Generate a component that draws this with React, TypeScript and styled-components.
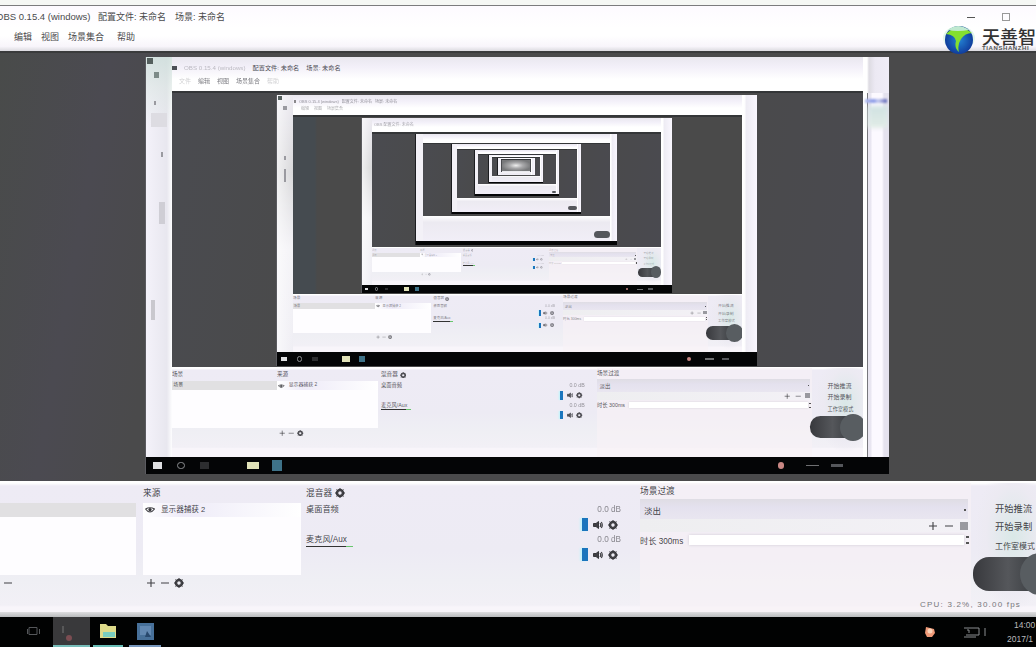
import React from 'react';
import styled, { createGlobalStyle } from 'styled-components';

const Global = createGlobalStyle`
  * { box-sizing: border-box; }
  body { margin: 0; background: #000; overflow: hidden; }
  #root { font-family: "Liberation Sans", "Noto Sans CJK SC", sans-serif; }
`;

const Screen = styled.div`
  position: relative;
  display: flex;
  flex-direction: column;
  width: 1036px;
  height: 647px;
  overflow: hidden;
  color: #333;
`;
const Desktop = styled.div`
  height: 6px;
  background: #f5f7f4;
  border-bottom: 1px solid #7b7b7d;
`;
const Bar = styled.div<{ $h: number; $bg?: string; $pb?: number }>`
  display: flex;
  align-items: center;
  height: ${p => p.$h}px;
  padding-bottom: ${p => p.$pb || 0}px;
  background: ${p => p.$bg || 'linear-gradient(#fdfaff, #fff)'};
`;
const Label = styled.span<{ $w: number; $ml?: number; $size?: number }>`
  flex: none;
  width: ${p => p.$w}px;
  margin-left: ${p => p.$ml || 0}px;
  font-size: ${p => p.$size || 9.5}px;
  line-height: 1.2;
  color: #4a4a4c;
  white-space: nowrap;
`;
const Controls = styled.div`
  display: flex;
  align-items: center;
  gap: 27px;
  margin-left: auto;
  padding-right: 26px;
`;
const MinLine = styled.i`width: 8px; height: 1px; background: #555;`;
const MaxBox = styled.i`width: 8px; height: 8px; border: 1px solid #999;`;
const Logo = styled.div`
  position: absolute;
  left: 941px;
  top: 25px;
  display: flex;
  gap: 7px;
  svg { flex: none; }
`;
const LogoText = styled.div`
  padding-top: 2px;
  font: 500 18px/18px "Noto Sans CJK SC", sans-serif;
  color: #333;
  white-space: nowrap;
  small { display: block; font: 700 6px/6px "Liberation Sans", sans-serif; letter-spacing: .6px; color: #555; }
`;

/* preview canvas and mirrored windows */
const Stage = styled.div<{ $h: number }>`
  flex: none;
  height: ${p => p.$h}px;
  overflow: hidden;
  border-top: 2px solid #3a3b3c;
  background: linear-gradient(100deg, #494b4a 0, #4b4a51 10%, #4a4a4b 18%, #4a4a4b 85%, #4a4a4a);
`;
const Frame = styled.div<{ $x: number; $y: number; $cols: string; $rows: string; $line: string }>`
  display: grid;
  width: max-content;
  margin-left: ${p => p.$x}px;
  margin-top: ${p => p.$y}px;
  grid-template-columns: ${p => p.$cols};
  grid-template-rows: ${p => p.$rows};
  background: #f1eff6;
  box-shadow: -1px 0 0 ${p => p.$line};
`;
const LeftStrip = styled.div<{ $i: number }>`
  grid-area: 1 / 1 / 4 / 2;
  display: flex;
  flex-direction: column;
  align-items: center;
  overflow: hidden;
  background: ${p => p.$i > 2 ? '#f3f1f7' : p.$i > 0
    ? 'linear-gradient(90deg, rgba(255,255,255,.6), rgba(255,255,255,0)), linear-gradient(#eceaf1, #d8d8da 30%, #f4f3f7 60%, #efeef4)'
    : 'linear-gradient(rgba(205,222,218,.8), rgba(215,228,222,.5) 30px, rgba(240,240,245,0) 70px), linear-gradient(90deg, #f4f2fa, #e8e7ef 80%, #fdfdfe)'};
`;
const Corner = styled.i<{ $s: number }>`
  flex: none;
  align-self: flex-start;
  width: ${p => p.$s}px;
  height: ${p => p.$s}px;
  margin: 1px;
  background: #55605e;
`;
const Mark = styled.i<{ $t: number; $h: number; $w?: number; $c?: string; $ml?: number }>`
  flex: none;
  width: ${p => p.$w || 2}px;
  height: ${p => p.$h}px;
  margin-top: ${p => p.$t}px;
  margin-left: ${p => p.$ml || 0}px;
  background: ${p => p.$c || '#9a9aa0'};
`;
const RightStrip = styled.div<{ $big: boolean }>`
  grid-area: 1 / 3 / 4 / 4;
  overflow: hidden;
  background: linear-gradient(90deg, #fff 0 15%, #eeecf4 30%, #faf7ff);
  ${p => p.$big && 'background: linear-gradient(90deg, #fff 0 4px, #77777c 4px 5px, #e9e6f1 5px 8px, #fcf9ff 9px 19px, #e5e2ee 21px);'}
`;
const TopCap = styled.div`height: 36px; background: linear-gradient(90deg, #fff 0 4px, #dddbe2 6px, #ece9f3 12px, #f0edf7);`;
const BlueMark = styled.div`
  width: 22px;
  height: 4px;
  margin: 6px 0 0 2px;
  background: linear-gradient(90deg, #b7c0ef, #8b9ae7 40%, #c8cdf0 60%, #5e65b6);
  filter: blur(1px);
`;
const GreenPatch = styled.div`
  width: 20px;
  height: 22px;
  margin: 3px 0 0 5px;
  background: linear-gradient(#d0e2e2, #e2ede7);
  filter: blur(2px);
`;
const Head = styled.div`
  grid-area: 1 / 2 / 2 / 3;
  display: flex;
  flex-direction: column;
  overflow: hidden;
  background: linear-gradient(#e9e7ef 0, #f3f0f9 30%, #fff 65%);
`;
const HeadRow = styled.div<{ $fs: number; $h: number; $pl: number; $o?: number; $gap?: number }>`
  display: flex;
  align-items: center;
  flex: none;
  gap: ${p => p.$gap ?? 7}px;
  height: ${p => p.$h}px;
  padding-left: ${p => p.$pl}px;
  font-size: ${p => p.$fs}px;
  line-height: 1;
  color: #4d4d55;
  opacity: ${p => p.$o || 1};
  white-space: nowrap;
`;
const Faint = styled.span`opacity: .35;`;
const Canvas = styled.div<{ $i: number }>`
  grid-area: 2 / 2 / 3 / 3;
  overflow: hidden;
  border-top: ${p => (p.$i < 3 ? 2 : 1)}px solid #343638;
  background: ${p => p.$i === 1 ? 'linear-gradient(90deg, #454b50 0 22px, #4a4a4a 24px)' : 'linear-gradient(100deg, #4a4b50, #4a4a4a 25%, #4a4a4b 75%, #4a4a50)'};
`;
const DockCell = styled.div`grid-area: 3 / 2 / 4 / 3; min-width: 0;`;
const Tasks = styled.div<{ $fs: number }>`
  grid-area: 4 / 1 / 5 / 4;
  display: flex;
  align-items: center;
  overflow: hidden;
  font-size: ${p => p.$fs}px;
  padding: 0 .7em;
  gap: 1.6em;
  background: #040506;
`;
const Glyph = styled.i<{ $c: string; $w?: number; $h?: number; $ml?: number; $round?: boolean }>`
  flex: none;
  width: ${p => p.$w || .9}em;
  height: ${p => p.$h || .7}em;
  margin-left: ${p => p.$ml || 0}em;
  border-radius: ${p => p.$round ? '50%' : 0};
  background: ${p => p.$c};
`;
const Ring = styled.i`
  flex: none;
  width: .8em;
  height: .8em;
  border: .12em solid #8b8d90;
  border-radius: 50%;
`;
const Vanish = styled.div`
  width: 28px;
  height: 13px;
  margin: 0 1px;
  background: radial-gradient(ellipse, #eee 0, #a9a9ab 35%, #77787a 75%);
  border-bottom: 2px solid #e9e9ed;
`;

/* docks: every length is in em so that it scales with the window */
const DockBox = styled.div<{ $s: number; $cols: string; $h: string; $o: number }>`
  position: relative;
  display: grid;
  grid-template-columns: ${p => p.$cols};
  height: ${p => p.$h};
  padding-top: .2em;
  font-size: ${p => p.$s * 10}px;
  overflow: hidden;
  white-space: nowrap;
  background: linear-gradient(#fff 0 .2em, #eeebf5 .5em, #edebf4 7em, #efeff4 10em, #f2f0f6 12.4em, #f8f5fa 12.6em);
  --ink: rgba(45, 45, 50, ${p => p.$o});
  color: var(--ink);
`;
const Panel = styled.div<{ $bg?: string }>`min-width: 0; background: ${p => p.$bg || 'transparent'};`;
const Title = styled.div<{ $pl?: number; $h?: number }>`
  display: flex;
  align-items: center;
  gap: .3em;
  height: ${p => p.$h || 2}em;
  padding-left: ${p => p.$pl || 0}em;
  line-height: 1;
  & > span { font-size: .87em; }
`;
const List = styled.div<{ $mr: number }>`height: 7.2em; margin-right: ${p => p.$mr}em; background: #fefdff;`;
const Item = styled.div<{ $on?: boolean }>`
  display: flex;
  align-items: center;
  gap: .6em;
  height: 1.4em;
  padding-left: .2em;
  line-height: 1;
  background: ${p => p.$on ? '#e1e0e2' : 'linear-gradient(90deg, #fff, #eeebf8 4em, #fff)'};
  & > span { font-size: .76em; }
`;
const Tools = styled.div`
  display: flex;
  align-items: center;
  gap: .4em;
  height: 1.6em;
  padding-left: .3em;
`;
const Icon = styled.svg`width: 1em; height: 1em; flex: none; fill: none; stroke: var(--ink);`;
const Track = styled.div`height: 3em; padding: .2em 1.9em 0 .3em;`;
const Line = styled.div`
  display: flex;
  justify-content: space-between;
  align-items: center;
  height: 1.1em;
  line-height: 1;
  span { font-size: .82em; }
  span:last-child { opacity: .6; }
`;
const Level = styled.div<{ $on?: boolean }>`
  width: 4.7em;
  height: max(.1em, 1px);
  background: ${p => p.$on ? 'linear-gradient(90deg, #333 85%, #68c66e 85%)' : 'transparent'};
`;
const Knobs = styled.div`
  display: flex;
  justify-content: flex-end;
  align-items: center;
  gap: .5em;
  height: 1.5em;
  padding-right: .3em;
`;
const Slider = styled.i`width: .6em; height: 1.3em; background: #1a75bd; box-shadow: -.2em 0 .2em #c5f3fb;`;
const Combo = styled.div`
  display: flex;
  align-items: center;
  justify-content: space-between;
  height: 2em;
  margin-right: .3em;
  padding: .2em .2em 0 .4em;
  background: linear-gradient(#dfdde4, #e4e1ee 40%, #e9e6f0);
  & > span { font-size: .85em; }
  & > i { width: .2em; height: .2em; background: #555; }
`;
const Right = styled.div`
  display: flex;
  align-items: center;
  justify-content: flex-end;
  gap: .6em;
  height: 1.3em;
  padding-right: .3em;
  background: linear-gradient(90deg, #eeeef0, #f3f1f6);
`;
const Duration = styled.div`
  display: flex;
  align-items: center;
  height: 1.6em;
  & > span { width: 6em; font-size: .82em; }
  & > i { flex: 1; height: 1em; background: #fff; box-shadow: 0 0 .3em #ccc9d3; }
  & > b { width: .3em; height: .8em; margin: 0 .2em; border: solid #555; border-width: .2em 0; }
`;
const Buttons = styled.div`
  display: flex;
  flex-direction: column;
  gap: .85em;
  padding: 2.2em 0 0 2.4em;
  line-height: 1.05;
  background: radial-gradient(ellipse at 65% 40%, #d9e8e7 0, #eceaf2 45%, transparent 65%);
  span { display: block; font-size: .93em; }
  span:last-child { font-size: .8em; line-height: 1.2; }
`;
const Pill = styled.div<{ $x: number }>`
  position: absolute;
  left: ${p => p.$x}px;
  top: 7.6em;
  width: 7em;
  height: 3.4em;
  border-radius: 1.6em 0 0 1.6em;
  background: linear-gradient(90deg, #38393d, #55575b 50%, #44474b 75%);
  &::after {
    content: "";
    position: absolute;
    left: 4.7em;
    top: -.4em;
    width: 4em;
    height: 4.2em;
    border-radius: 50%;
    background: #585d61;
  }
`;
const Status = styled.div`
  position: absolute;
  right: 15px;
  bottom: 7px;
  font-size: 8px;
  line-height: 10px;
  color: #77777b;
  letter-spacing: 1.2px;
`;
const BottomEdge = styled.div`
  position: absolute;
  left: 0; right: 0; bottom: 0;
  height: 5px;
  background: linear-gradient(#dedee0, #b9bbbd);
`;

const Gear = () => (
  <Icon viewBox="0 0 10 10" strokeWidth="2.6"><circle cx="5" cy="5" r="3" /><path strokeWidth="1" d="M5 0v2M5 8v2M0 5h2M8 5h2M1.5 1.5l1 1M7.5 7.5l1 1M8.5 1.5l-1 1M1.5 8.5l1-1" /></Icon>
);
const Speaker = () => (
  <Icon viewBox="0 0 10 10"><path fill="var(--ink)" d="M.5 3.5H3L5.5 1.5v7L3 6.5H.5z" /><path strokeWidth="1.2" d="M7 3q1.5 2 0 4M8.3 2q2 3 0 6" /></Icon>
);
const Plus = () => <Icon viewBox="0 0 10 10"><path strokeWidth="1.1" d="M1 5h8M5 1v8" /></Icon>;
const Minus = () => <Icon viewBox="0 0 10 10"><path d="M1 5h8" /></Icon>;
const Eye = () => <Icon viewBox="0 0 10 10"><path strokeWidth="1.2" d="M.5 4Q5 10 9.5 4Q5 1.5 .5 4" /><circle cx="5" cy="4.8" r="1.2" fill="var(--ink)" /></Icon>;

type DockProps = { s: number; cols: string; h: string; ink: number; pill: number; outer?: boolean };
const Dock = ({ s, cols, h, ink, pill, outer }: DockProps) => (
  <DockBox $s={s} $cols={cols} $h={h} $o={ink}>
    <Panel>
      <Title>{!outer && <span>场景</span>}</Title>
      <List $mr={outer ? .7 : 0}><Item $on>{!outer && <span>场景</span>}</Item></List>
      {outer && <Tools><Minus /></Tools>}
    </Panel>
    <Panel>
      <Title><span>来源</span></Title>
      <List $mr={.2}><Item><Eye /><span>显示器捕获 2</span></Item></List>
      <Tools><Plus /><Minus /><Gear /></Tools>
    </Panel>
    <Panel>
      <Title $pl={.3}><span>混音器</span><Gear /></Title>
      <Track>
        <Line><span>桌面音频</span><span>0.0 dB</span></Line>
        <Level />
        <Knobs><Slider /><Speaker /><Gear /></Knobs>
      </Track>
      <Track>
        <Line><span>麦克风/Aux</span><span>0.0 dB</span></Line>
        <Level $on />
        <Knobs><Slider /><Speaker /><Gear /></Knobs>
      </Track>
    </Panel>
    <Panel $bg="rgba(248, 241, 246, .65)">
      <Title $h={1.6}><span>场景过渡</span></Title>
      <Combo><span>淡出</span><i /></Combo>
      <Right><Plus /><Minus /><Glyph $c="#99999f" $w={.8} $h={.8} /></Right>
      <Duration><span>时长 300ms</span><i /><b /></Duration>
    </Panel>
    <Buttons><span>开始推流</span><span>开始录制</span><span>工作室模式</span></Buttons>
    <Pill $x={pill} />
    {outer && <><Status>CPU: 3.2%, 30.00 fps</Status><BottomEdge /></>}
  </DockBox>
);

/* each entry: window box, then its canvas box, then where the taskbar starts */
type Win = { x: number; y: number; r: number; b: number; cx: number; cy: number; cr: number; cb: number; t: number };
const windows: Win[] = [
  { x: 146, y: 57, r: 889, b: 474, cx: 172, cy: 91, cr: 863, cb: 367, t: 457 },
  { x: 277, y: 95, r: 757, b: 366, cx: 293, cy: 115, cr: 742, cb: 294, t: 352 },
  { x: 362, y: 118, r: 672, b: 293, cx: 372, cy: 132, cr: 661, cb: 247, t: 285 },
  { x: 416, y: 134, r: 617, b: 245, cx: 423, cy: 143, cr: 610, cb: 216, t: 241 },
  { x: 452, y: 144, r: 581, b: 214, cx: 457, cy: 149, cr: 577, cb: 198, t: 212 },
  { x: 475, y: 150, r: 559, b: 196, cx: 478, cy: 154, cr: 556, cb: 184, t: 194 },
  { x: 489, y: 155, r: 543, b: 183, cx: 492, cy: 157, cr: 540, cb: 176, t: 182 },
  { x: 498, y: 158, r: 535, b: 175, cx: 501, cy: 159, cr: 531, cb: 172, t: 175 },
];
const docks = [
  { s: .647, cols: '105px 102px 218px 215px 51px', ink: .8, pill: 638 },
  { s: .42, cols: '82px 57px 131px 145px 34px', ink: .6, pill: 413 },
  { s: .27, cols: '48px 42px 87px 88px 24px', ink: .35, pill: 266 },
];

const SmallDock = styled.div<{ $fs: number }>`
  display: flex;
  justify-content: flex-end;
  align-items: flex-end;
  height: 100%;
  padding: 0 0 ${p => p.$fs * .3}px 0;
  background: linear-gradient(#fff, #eceaf1 25%, #f1eef7);
`;
const SmallPill = styled.i<{ $w: number }>`
  width: ${p => p.$w}px;
  height: ${p => p.$w * .42}px;
  border-radius: ${p => p.$w * .25}px;
  background: #55575c;
`;

const Mirror = ({ i, px, py }: { i: number; px: number; py: number }) => {
  const w = windows[i];
  const s = [.647, .42, .27][i] || .17;
  const border = i < 3 ? 2 : 1;
  return (
    <Frame $x={w.x - px} $y={w.y - py}
      $cols={`${w.cx - w.x}px ${w.cr - w.cx}px ${w.r - w.cr}px`}
      $rows={`${w.cy - w.y}px ${w.cb - w.cy}px ${w.t - w.cb}px ${w.b - w.t}px`}
      $line={i > 2 ? '#1c1d20' : '#5b5b60'}>
      <LeftStrip $i={i}>
        {i < 2 && <Corner $s={6 - i * 2} />}
        {i === 0 && <><Mark $t={7} $h={6} $w={5} $ml={-6} $c="#7d8b88" /><Mark $t={23} $h={4} $ml={-8} /><Mark $t={8} $h={14} $w={16} $c="#dddce2" /><Mark $t={25} $h={5} $ml={5} /><Mark $t={45} $h={22} $w={6} $ml={6} $c="#cfced5" /><Mark $t={76} $h={20} $w={4} $ml={-12} $c="#c9c8ce" /></>}
        {i === 1 && <><Mark $t={5} $h={4} $w={4} /><Mark $t={46} $h={4} /><Mark $t={9} $h={13} /></>}
      </LeftStrip>
      <Head>
        {i === 0 && <>
          <HeadRow $fs={6.2} $h={22} $pl={0}><Glyph $c="#4c4f56" $w={.8} $h={.8} /><Faint>OBS 0.15.4 (windows)</Faint><span>配置文件: 未命名</span><span>场景: 未命名</span></HeadRow>
          <HeadRow $fs={6} $h={4} $pl={7} $o={.75}><Faint>文件</Faint><span>编辑</span><span>视图</span><span>场景集合</span><Faint>帮助</Faint></HeadRow>
        </>}
        {i === 1 && <>
          <HeadRow $fs={4} $h={13} $pl={1} $o={.6} $gap={3}><Glyph $c="#444" $w={.5} /><span>OBS 0.15.4 (windows)</span><span>配置文件: 未命名</span><span>场景: 未命名</span></HeadRow>
          <HeadRow $fs={4} $h={2} $pl={8} $o={.45} $gap={5}><span>编辑</span><span>视图</span><span>场景集合</span></HeadRow>
        </>}
        {i === 2 && <HeadRow $fs={4} $h={14} $pl={2} $o={.5} $gap={2}><span>OBS 配置文件: 未命名</span></HeadRow>}
      </Head>
      <Canvas $i={i}>
        {i < windows.length - 1 ? <Mirror i={i + 1} px={w.cx} py={w.cy + border} /> : <Vanish />}
      </Canvas>
      <RightStrip $big={i === 0}>{i === 0 && <><TopCap /><BlueMark /><GreenPatch /></>}</RightStrip>
      <DockCell>
        {i < 3
          ? <Dock s={s} cols={docks[i].cols} h={`${w.t - w.cb}px`} ink={docks[i].ink} pill={docks[i].pill} />
          : <SmallDock $fs={(w.t - w.cb) / 2.2}>{i < 6 && <SmallPill $w={[16, 9, 4][i - 3]} />}</SmallDock>}
      </DockCell>
      <Tasks $fs={s * 15}>
        {i < 3 && <>
          <Glyph $c="#dfe0e2" /><Ring /><Glyph $c="#2c2d2f" />
          <Glyph $c="#e1e2b8" $w={1.2} $h={.8} $ml={2.3} /><Glyph $c="#3e7288" $w={1} $h={1.1} $ml={-.2} />
          <Glyph $c="#c98783" $ml={49.5} $round $w={.7} /><Glyph $c="#6f7072" $w={1.4} $h={.2} $ml={.6} /><Glyph $c="#55575b" $w={1.2} $h={.4} $ml={-.4} />
        </>}
      </Tasks>
    </Frame>
  );
};

const Taskbar = styled.div`
  display: flex;
  align-items: stretch;
  height: 30px;
  background: #010202;
`;
const Task = styled.div<{ $w: number; $ml?: number; $on?: boolean; $line?: string }>`
  display: flex;
  align-items: center;
  justify-content: center;
  width: ${p => p.$w}px;
  margin-left: ${p => p.$ml || 0}px;
  background: ${p => p.$on ? '#39393b' : 'transparent'};
  border-bottom: 2px solid ${p => p.$line || 'transparent'};
`;
const Tray = styled.div`
  display: flex;
  align-items: center;
  gap: 10px;
  margin-left: auto;
  & > svg:first-child { margin-right: -5px; }
`;
const Clock = styled.div`
  width: 22px;
  color: #b9babd;
  font-size: 8.5px;
  line-height: 14px;
  white-space: nowrap;
  div:last-child { margin-left: -7px; }
`;

export default function App() {
  return (
    <Screen>
      <Global />
      <Desktop />
      <Bar $h={22}>
        <Label $w={98} $ml={-4}>OBS 0.15.4 (windows)</Label>
        <Label $w={77} $ml={4} $size={9}>配置文件: 未命名</Label>
        <Label $w={60} $size={9}>场景: 未命名</Label>
        <Controls><MinLine /><MaxBox /></Controls>
      </Bar>
      <Bar $h={23} $pb={5} $bg="linear-gradient(#fff 0 8px, #f8f5fb 80%, #dcdbe0)">
        <Label $w={27} $ml={14} $size={9}>编辑</Label>
        <Label $w={27} $size={9}>视图</Label>
        <Label $w={49} $size={9}>场景集合</Label>
        <Label $w={30} $size={9}>帮助</Label>
      </Bar>
      <Stage $h={430}><Mirror i={0} px={0} py={53} /></Stage>
      <Dock s={1} cols="143px 160px 337px 331px 65px" h="136px" ink={.9} pill={973} outer />
      <Taskbar>
        <Task $w={22} $ml={22}><svg width="13" height="9"><path d="M2 .5h8v7H2zM.5 2v5M12.5 2v5" fill="none" stroke="#55575a" /></svg></Task>
        <Task $w={37} $ml={9} $on $line="#76bdb9"><svg width="24" height="20"><path d="M3 5v7" stroke="#777" /><circle cx="9" cy="17" r="3" fill="#7b4d52" /></svg></Task>
        <Task $w={30} $ml={3} $line="#67bcb5"><svg width="16" height="16"><path d="M0 1h6l2 2h8v12H0z" fill="#dedb8a" /><path d="M3 9h12v5H3z" fill="#79cec0" /></svg></Task>
        <Task $w={32} $ml={6} $line="#7797bd"><svg width="17" height="17"><path d="M0 0h17v17H0z" fill="#477099" /><path d="M3 3h11v9H3z" fill="#6288b1" /><path d="M10 8l4 6H8z" fill="#27486d" /></svg></Task>
        <Tray>
          <svg width="11" height="12"><path d="M1 1l4 1 4 1 1 4-3 4H2L0 7z" fill="#ef9a78" /><circle cx="5" cy="5" r="2.5" fill="#fbd4b9" /></svg>
          <svg width="63" height="12"><path d="M23 2h15v7H25M26 4h2v3M23 11h12M44 2v8" fill="none" stroke="#8b8d90" /></svg>
          <Clock><div>14:00</div><div>2017/1</div></Clock>
        </Tray>
      </Taskbar>
      <Logo>
        <svg width="34" height="31" viewBox="0 0 34 31">
          <defs><radialGradient id="globe"><stop offset="0" stopColor="#2484d4" /><stop offset="1" stopColor="#103d9d" /></radialGradient></defs>
          <ellipse cx="18" cy="13" rx="16" ry="12" fill="#e2f6ec" />
          <circle cx="18" cy="15" r="14" fill="url(#globe)" />
          <path d="M5 9Q17 -3 31 8Q24 8 20 14T18 27Q13 23 15 16Q14 10 5 9z" fill="#84df2f" />
          <path d="M7 5Q17 -3 28 5Q16 7 7 5z" fill="#bfe9d0" />
        </svg>
        <LogoText>天善智<small>TIANSHANZHI</small></LogoText>
      </Logo>
    </Screen>
  );
}
